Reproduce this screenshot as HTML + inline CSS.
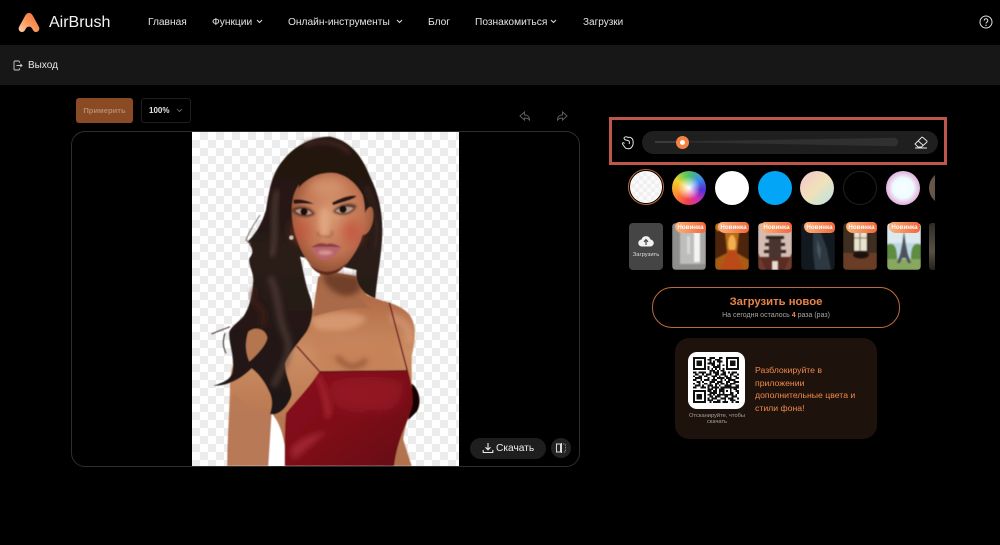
<!DOCTYPE html>
<html lang="ru">
<head>
<meta charset="utf-8">
<title>AirBrush</title>
<style>
html,body{margin:0;padding:0;background:#000}
body{width:1000px;height:545px;position:relative;overflow:hidden;font-family:"Liberation Sans",sans-serif;color:#fff}
.a{position:absolute;white-space:nowrap}
.nav{top:16px;font-size:10.2px;line-height:13px;color:#e4e4e4}
.c{position:absolute;top:171px;width:34px;height:34px;border-radius:50%}
.t{position:absolute;top:223px;width:34px;height:47px;border-radius:4px;overflow:hidden}
.t svg{position:absolute;left:0;top:0;width:34px;height:47px;filter:blur(.9px)}
.b{position:absolute;top:222px;height:11px;width:31px;border-radius:5px 5px 5px 8px;background:linear-gradient(90deg,#fbb27c,#f0683a);color:#fff;font-size:6.2px;font-weight:bold;line-height:11px;text-align:center}
</style>
</head>
<body>
<!-- top bar -->
<svg class="a" style="left:18px;top:12px" width="22" height="21" viewBox="0 0 22 21">
<defs><linearGradient id="lg" x1="0" y1="1" x2="1" y2="0"><stop offset="0" stop-color="#ffd2ae"/><stop offset=".5" stop-color="#fb9458"/><stop offset="1" stop-color="#f26a36"/></linearGradient></defs>
<path d="M11 1C9 1 8 2.200 7 4L1 15C0 17 1.200 20 4 20C6 20 6.800 18.600 7.600 17C8.400 15.400 9.500 14.600 11 14.600C12.500 14.600 13.600 15.400 14.400 17C15.200 18.600 16 20 18 20C20.800 20 22 17 21 15L15 4C14 2.200 13 1 11 1Z" fill="url(#lg)"/>
</svg>
<div class="a" style="left:49px;top:13px;font-size:16px;line-height:19px;letter-spacing:0;color:#f2f2f2">AirBrush</div>
<div class="a nav" style="left:148px">Главная</div>
<div class="a nav" style="left:212px">Функции</div>
<svg class="a" style="left:256px;top:19px" width="7" height="5" viewBox="0 0 7 5"><path d="M1 1l2.500 2.500L6 1" fill="none" stroke="#ddd" stroke-width="1"/></svg>
<div class="a nav" style="left:288px">Онлайн-инструменты</div>
<svg class="a" style="left:396px;top:19px" width="7" height="5" viewBox="0 0 7 5"><path d="M1 1l2.500 2.500L6 1" fill="none" stroke="#ddd" stroke-width="1"/></svg>
<div class="a nav" style="left:428px">Блог</div>
<div class="a nav" style="left:475px">Познакомиться</div>
<svg class="a" style="left:550px;top:19px" width="7" height="5" viewBox="0 0 7 5"><path d="M1 1l2.500 2.500L6 1" fill="none" stroke="#ddd" stroke-width="1"/></svg>
<div class="a nav" style="left:583px;font-size:10px">Загрузки</div>
<svg class="a" style="left:979px;top:15px" width="14" height="14" viewBox="0 0 14 14"><circle cx="7" cy="7" r="6" fill="none" stroke="#ddd" stroke-width="1"/><path d="M5.200 5.600a1.800 1.800 0 1 1 2.700 1.500c-.6.400-.9.700-.9 1.400" fill="none" stroke="#ddd" stroke-width="1"/><circle cx="7" cy="10.300" r=".7" fill="#ddd"/></svg>

<!-- sub bar -->
<div class="a" style="left:0;top:45px;width:1000px;height:40px;background:#171717"></div>
<svg class="a" style="left:13px;top:60px" width="10" height="11" viewBox="0 0 10 11"><path d="M6.500 2.800V2a1 1 0 0 0-1-1H2a1 1 0 0 0-1 1v7a1 1 0 0 0 1 1h3.500a1 1 0 0 0 1-1v-.8M3.500 5.500h5.500M7.400 3.900 9 5.500 7.400 7.100" fill="none" stroke="#ccc" stroke-width=".9"/></svg>
<div class="a" style="left:28px;top:59px;font-size:10px;line-height:13px;color:#e6e6e6">Выход</div>

<!-- toolbar -->
<div class="a" style="left:76px;top:98px;width:57px;height:25px;border-radius:3px;background:#8a4a24;color:#b48a70;font-size:7.600px;font-weight:bold;line-height:25px;text-align:center">Примерить</div>
<div class="a" style="left:141px;top:98px;width:48px;height:23px;border:1px solid #1e1e1e;border-radius:3px"></div>
<div class="a" style="left:149px;top:105px;font-size:8px;font-weight:bold;line-height:11px;color:#e6e6e6">100%</div>
<svg class="a" style="left:176px;top:108px" width="7" height="5" viewBox="0 0 7 5"><path d="M1 1l2.500 2.500L6 1" fill="none" stroke="#777" stroke-width=".8"/></svg>
<svg class="a" style="left:519px;top:111px" width="12" height="11" viewBox="0 0 12 11"><path d="M5.500 1 1 5l4.500 4V7c2 0 3.600.4 5 2 0-3-1.800-5-5-5Z" fill="none" stroke="#5e5e5e" stroke-width="1"/></svg>
<svg class="a" style="left:556px;top:111px" width="12" height="11" viewBox="0 0 12 11"><path d="M6.500 1 11 5 6.500 9V7c-2 0-3.600.4-5 2 0-3 1.800-5 5-5Z" fill="none" stroke="#5e5e5e" stroke-width="1"/></svg>

<!-- canvas -->
<div class="a" style="left:71px;top:131px;width:507px;height:334px;border:1px solid #2e2e2e;border-radius:14px;background:#000"></div>
<div class="a" style="left:192px;top:132px;width:267px;height:334px;background:conic-gradient(#ececec 25%,#fff 0 50%,#ececec 0 75%,#fff 0) 0 0/16px 16px"></div>

<svg class="a" style="left:190px;top:130px" width="270" height="336" viewBox="0 0 810 1008">
<defs>
<filter id="bl0" x="-5%" y="-5%" width="110%" height="110%"><feGaussianBlur stdDeviation="1.700"/></filter>
<filter id="bl2" x="-40%" y="-40%" width="180%" height="180%"><feGaussianBlur stdDeviation="8"/></filter>
<filter id="bl3" x="-60%" y="-60%" width="220%" height="220%"><feGaussianBlur stdDeviation="16"/></filter>
<filter id="bl4" x="-40%" y="-40%" width="180%" height="180%"><feGaussianBlur stdDeviation="3.500"/></filter>
<radialGradient id="fg" cx=".5" cy=".42" r=".62"><stop offset="0" stop-color="#d89a72"/><stop offset=".6" stop-color="#c07452"/><stop offset="1" stop-color="#84462c"/></radialGradient>
<linearGradient id="sk" x1="0" y1="0" x2="0" y2="1"><stop offset="0" stop-color="#a0603f"/><stop offset=".12" stop-color="#b26c48"/><stop offset=".4" stop-color="#cc8e64"/><stop offset=".7" stop-color="#bc7a52"/><stop offset="1" stop-color="#b0714e"/></linearGradient>
<linearGradient id="dr" x1="0" y1="0" x2="1" y2="1"><stop offset="0" stop-color="#8a0f1c"/><stop offset=".5" stop-color="#7e0d19"/><stop offset="1" stop-color="#640914"/></linearGradient>
<linearGradient id="hr" x1="0" y1="0" x2="0" y2="1"><stop offset="0" stop-color="#22120e"/><stop offset=".45" stop-color="#2a1c19"/><stop offset="1" stop-color="#1e1513"/></linearGradient>
</defs>
<g filter="url(#bl0)">
<!-- black shadow right -->
<path d="M665 760 C690 780 695 820 680 845 L655 870Z" fill="#120404"/>
<!-- body -->
<path d="M112 1008 C112 930 118 850 120 780 C118 720 140 650 170 600 C220 570 300 560 370 535 L385 440 L510 450 L530 495 C570 515 620 515 655 550 C680 580 678 620 665 680 L665 800 C660 860 640 900 640 930 L665 1008Z" fill="url(#sk)"/>
<path d="M360 565 C420 540 490 540 530 565 C510 600 430 610 375 595Z" fill="#dfa47c" opacity=".7" filter="url(#bl2)"/>
<path d="M370 620 C430 650 560 640 620 620 C630 660 640 700 640 720 L400 720 C380 690 365 650 370 620Z" fill="#c47c52" opacity=".6" filter="url(#bl3)"/>
<path d="M440 680 C470 715 495 720 530 690" fill="none" stroke="#804226" stroke-width="14" opacity=".7" filter="url(#bl2)"/>
<path d="M600 560 C640 570 660 590 660 640" fill="none" stroke="#dca27e" stroke-width="26" opacity=".5" filter="url(#bl2)"/>
<path d="M370 540 C390 500 390 460 390 420 L510 440 C500 480 510 510 540 535 C470 530 420 545 370 560Z" fill="#a96a48"/>
<path d="M400 450 C430 500 480 510 510 480 L510 440 L400 425Z" fill="#643420" opacity=".8" filter="url(#bl2)"/>
<path d="M130 790 C180 830 220 860 245 850 L250 1008 L115 1008 C115 930 120 860 130 790Z" fill="#b87a58" opacity=".9"/>
<path d="M245 850 C260 870 285 900 290 1008 L235 1008Z" fill="#fff"/>
<path d="M262 860 C275 870 285 890 290 940 L285 860Z" fill="#b47450"/>
<!-- straps -->
<path d="M598 518 L652 722" stroke="#6b0d1a" stroke-width="4" fill="none"/>
<path d="M320 648 L388 724" stroke="#6b0d1a" stroke-width="4" fill="none"/>
<!-- dress -->
<path d="M284 1008 C284 950 284 890 288 850 C320 810 360 770 388 725 L654 722 C662 750 670 790 668 820 C660 870 625 910 612 1008Z" fill="url(#dr)"/>
<path d="M390 730 C405 780 420 810 425 850 L410 870 C400 820 395 780 380 745Z" fill="#b93240" opacity=".65" filter="url(#bl2)"/>
<path d="M420 760 C490 740 570 740 640 760 C640 800 630 830 600 840 C530 850 460 840 430 820Z" fill="#a3202e" opacity=".55" filter="url(#bl3)"/>
<path d="M300 960 C320 930 360 910 410 905 C370 940 340 970 310 990Z" fill="#b13140" opacity=".6" filter="url(#bl2)"/>
<path d="M388 725 L654 722" stroke="#4a0710" stroke-width="3"/>
<!-- hair -->
<path d="M420 20 C370 20 315 45 280 90 C245 130 238 180 228 240 C215 285 190 320 172 335 C185 350 195 365 178 385 C175 405 190 425 190 450 C188 490 180 530 160 560 C140 580 125 590 118 605 C115 640 135 680 128 720 C125 745 110 755 70 767 C110 768 150 750 185 715 C205 730 225 755 240 790 C250 815 245 835 240 852 C265 860 295 830 305 795 C305 765 285 735 285 700 C300 665 325 640 350 605 C370 570 372 530 360 500 C345 460 340 420 330 380 L500 420 C495 450 510 490 556 505 C560 450 572 390 576 330 C580 260 570 200 540 140 C520 90 490 35 420 20Z" fill="url(#hr)"/>
<path d="M175 605 C200 585 230 600 232 625 C225 650 200 675 178 695 C165 665 165 635 175 605Z" fill="#b4764f"/>
<path d="M120 590 C100 598 80 605 65 612" fill="none" stroke="#3a2a26" stroke-width="3"/>
<path d="M105 610 C98 630 98 650 108 670" fill="none" stroke="#3a2a26" stroke-width="3"/>
<path d="M240 440 C270 500 260 560 290 620 C310 680 270 720 250 770" fill="none" stroke="#5e4a42" stroke-width="20" opacity=".55" filter="url(#bl2)"/>
<path d="M262 180 C245 250 262 310 245 380" fill="none" stroke="#6e5a50" stroke-width="14" opacity=".55" filter="url(#bl2)"/>
<path d="M195 470 C165 540 240 510 215 590" fill="none" stroke="#4a1f16" stroke-width="14" opacity=".7" filter="url(#bl2)"/>
<path d="M210 255 C190 285 175 310 168 330 L182 342" fill="none" stroke="#6b5a52" stroke-width="2.500"/>
<path d="M530 170 C560 240 565 300 555 360" fill="none" stroke="#3f2c26" stroke-width="14" opacity=".6" filter="url(#bl2)"/>
<path d="M340 45 C400 25 450 35 480 70" fill="none" stroke="#50302a" stroke-width="14" opacity=".7" filter="url(#bl2)"/>
<!-- face -->
<path d="M330 160 C370 125 430 120 480 135 C515 160 525 210 525 250 C530 235 548 215 550 250 C552 285 535 315 518 315 C508 350 485 390 450 422 C425 442 395 436 372 415 C340 385 318 335 308 280 C302 230 305 190 330 160Z" fill="url(#fg)"/>
<ellipse cx="485" cy="305" rx="30" ry="38" fill="#c4503a" opacity=".7" filter="url(#bl3)"/>
<ellipse cx="335" cy="305" rx="24" ry="34" fill="#c4503a" opacity=".65" filter="url(#bl3)"/>
<ellipse cx="403" cy="280" rx="16" ry="48" fill="#e6ae88" opacity=".75" filter="url(#bl2)"/>
<ellipse cx="410" cy="170" rx="55" ry="25" fill="#d89c76" opacity=".7" filter="url(#bl3)"/>
<path d="M340 115 C390 100 430 105 470 120 C500 135 520 180 530 220 C510 170 480 140 440 130 C400 125 360 135 325 175Z" fill="#221210"/>
<!-- brows -->
<path d="M310 210 C325 205 350 210 372 222 C345 220 325 220 312 222Z" fill="#2a1814"/>
<path d="M426 218 C450 205 480 193 500 198 C490 210 455 216 430 226Z" fill="#2a1814"/>
<!-- eyes -->
<path d="M304 240 C325 222 360 226 376 252 C350 268 322 262 304 240Z" fill="#4a2a20" opacity=".8" filter="url(#bl4)"/>
<path d="M428 244 C450 218 485 215 500 228 C488 256 450 262 428 244Z" fill="#4a2a20" opacity=".8" filter="url(#bl4)"/>
<path d="M316 242 C330 233 352 235 366 250 C348 258 328 255 316 242Z" fill="#b89a8c"/>
<path d="M436 243 C452 230 475 228 490 234 C480 250 452 254 436 243Z" fill="#b89a8c"/>
<circle cx="342" cy="245" r="11" fill="#1e0e0a"/><circle cx="459" cy="238" r="11" fill="#1e0e0a"/>
<path d="M385 305 C378 318 395 322 405 320 C420 322 432 316 424 302" fill="none" stroke="#8e4e34" stroke-width="4" opacity=".75" filter="url(#bl4)"/>
<!-- lips -->
<path d="M364 352 C385 335 405 342 412 342 C425 338 440 340 454 352 C440 378 420 390 400 390 C385 390 372 372 364 352Z" fill="#b8666a"/>
<path d="M364 352 C390 350 430 350 454 352 C437 344 420 336 410 343 C395 336 380 340 364 352Z" fill="#8e4044"/>
<ellipse cx="406" cy="368" rx="21" ry="7" fill="#dc9a98" opacity=".9" filter="url(#bl4)"/>
<path d="M355 398 C380 430 430 438 470 398 C450 432 420 438 400 434 C380 430 365 415 355 398Z" fill="#5e2c1a"/>
<!-- earring -->
<circle cx="304" cy="323" r="6" fill="#cfc4b6"/>
</g>
</svg>

<!-- download -->
<div class="a" style="left:470px;top:438px;width:76px;height:21px;border-radius:11px;background:#1e1e1e"></div>
<svg class="a" style="left:482px;top:442px" width="12" height="12" viewBox="0 0 12 12"><path d="M6 1v6.500M3.500 5.200 6 7.800l2.500-2.600M1.200 8v2.500h9.600V8" fill="none" stroke="#eee" stroke-width="1.100"/></svg>
<div class="a" style="left:496px;top:442px;font-size:10.200px;line-height:13px;color:#eee">Скачать</div>
<div class="a" style="left:551px;top:438px;width:20px;height:20px;border-radius:50%;background:#222"></div>
<svg class="a" style="left:555px;top:442px" width="12" height="12" viewBox="0 0 12 12"><path d="M5.500 2H1.500v8h4z" fill="none" stroke="#ddd" stroke-width="1"/><path d="M6.500 1v10" stroke="#ddd" stroke-width="1"/><path d="M8 2h2.500v8H8" fill="none" stroke="#888" stroke-width="1" stroke-dasharray="1.500 1.200"/></svg>

<!-- red highlight box -->
<div class="a" style="left:609px;top:117px;width:332px;height:42px;border:3px solid #bf564b"></div>
<svg class="a" style="left:621px;top:135px" width="14" height="15" viewBox="0 0 14 15"><path d="M3 3C3.500 1.500 6 1.500 7 2.500C9 1.800 11.500 3 12 5.500C12.500 8 12 11 10 13C8 14 5 14 4 12.500L1.500 9C1 8 2.500 7 3.500 8.500" fill="none" stroke="#e4e4e4" stroke-width="1"/><path d="M3 3C3 5 5 5 7 5.500C8.500 6 9 7.500 8 9" fill="none" stroke="#e4e4e4" stroke-width="1"/></svg>
<div class="a" style="left:642px;top:131px;width:296px;height:23px;border-radius:12px;background:#1f1f1f"></div>
<svg class="a" style="left:654px;top:137px" width="246" height="10" viewBox="0 0 246 10"><path d="M1 4.700L240 .8a4.200 4.200 0 0 1 0 8.400Z" fill="#303030"/><path d="M1 4.500h27v1H1z" fill="#5a5a5a"/></svg>
<div class="a" style="left:676px;top:136px;width:13px;height:13px;border-radius:50%;background:#f58144"></div>
<div class="a" style="left:680px;top:140px;width:5px;height:5px;border-radius:50%;background:#fff"></div>
<svg class="a" style="left:914px;top:136px" width="14" height="13" viewBox="0 0 14 13"><path d="M1 8 7.500 1.500a1 1 0 0 1 1.400 0l3.800 3.300a1 1 0 0 1 0 1.500L7.500 11H4ZM4 4.800l5 4.300M1 12h12" fill="none" stroke="#e4e4e4" stroke-width="1"/></svg>

<!-- colour circles -->
<div class="c" style="left:628px;top:169px;width:36px;height:36px;border:1px solid #c06a3c;box-sizing:border-box"></div>
<div class="c" style="left:630px;top:171px;width:32px;height:32px;border:1px solid #fff;box-sizing:border-box;background:conic-gradient(#f0f0f0 25%,#fafafa 0 50%,#f0f0f0 0 75%,#fafafa 0) 0 0/8px 8px"></div>
<div class="c" style="left:672px;background:radial-gradient(circle at 50% 50%,#fff 0,rgba(255,255,255,.75) 12%,rgba(255,255,255,0) 48%),conic-gradient(#4fc06a,#3b8fe8 14%,#5030d8 27%,#d030b0 40%,#f04050 52%,#ff8c30 68%,#f0d030 84%,#70cc50 94%,#4fc06a)"></div>
<div class="c" style="left:715px;background:#fff"></div>
<div class="c" style="left:758px;background:#03a6f6"></div>
<div class="c" style="left:800px;background:linear-gradient(135deg,#f6c4d0,#f0e2b8 50%,#b8e2e8)"></div>
<div class="c" style="left:843px;background:#000;border:1px solid #222;box-sizing:border-box"></div>
<div class="c" style="left:886px;background:radial-gradient(circle,#f6feff 0,#eefcff 42%,#e6b8e0 66%,#d8bce6 76%,#a0c0e4 92%,#a8c4e0 100%)"></div>
<div class="a" style="left:929px;top:171px;width:6px;height:34px;overflow:hidden"><div style="width:34px;height:34px;border-radius:50%;background:linear-gradient(90deg,#6b5a4e,#3a2e28)"></div></div>

<!-- upload tile -->
<div class="a" style="left:629px;top:223px;width:34px;height:47px;border-radius:4px;background:#454545"></div>
<svg class="a" style="left:638px;top:234px" width="16" height="13" viewBox="0 0 16 13"><path d="M4 12.500a3.500 3.500 0 0 1-.5-7 4.700 4.700 0 0 1 9 0 3.500 3.500 0 0 1-.5 7Z" fill="#f0f0f0"/><path d="M8 11V6M6 7.800l2-2.200 2 2.200" fill="none" stroke="#454545" stroke-width="1.200"/></svg>
<div class="a" style="left:629px;top:251px;width:34px;text-align:center;font-size:5.800px;line-height:8px;color:#ddd">Загрузить</div>

<!-- thumbnails -->
<div class="t" style="left:672px"><svg viewBox="0 0 34 47"><rect width="34" height="47" fill="#bdbdbb"/><rect width="8" height="47" fill="#8f8f8d"/><rect x="28" width="6" height="47" fill="#a8a8a6"/><rect x="15" y="13" width="3" height="18" fill="#d8d8d8"/><rect x="22" y="9" width="6" height="30" fill="#f4f4f4"/><rect y="41" width="34" height="6" fill="#8e8e8c"/></svg></div>
<div class="t" style="left:715px"><svg viewBox="0 0 34 47"><rect width="34" height="47" fill="#a85c14"/><path d="M0 0h34v32L20 26h-6L0 34Z" fill="#b86a18"/><path d="M0 6l10 4 2 20-12 6zM34 5l-10 5-2 20 12 7z" fill="#4e240c"/><ellipse cx="17" cy="21" rx="4" ry="9" fill="#eeb050"/><path d="M14 27h6l9 20H5Z" fill="#bc4a18"/><rect x="2" y="3" width="6" height="5" fill="#d88a28"/><rect x="25" y="3" width="6" height="5" fill="#dc9030"/></svg></div>
<div class="t" style="left:758px"><svg viewBox="0 0 34 47"><rect width="34" height="47" fill="#d4bcb2"/><rect y="34" width="34" height="13" fill="#5a2c22"/><path d="M8 13h18v3H8zM7 20h20v3H7zM6 27h22v3H6z" fill="#2e2220"/><rect x="11" y="16" width="12" height="20" fill="#4a3430"/><path d="M0 30l8 17H0zM34 30l-8 17h8z" fill="#6e3a2c"/><rect x="14" y="38" width="6" height="9" fill="#e8dcd4"/></svg></div>
<div class="t" style="left:801px"><svg viewBox="0 0 34 47"><rect width="34" height="47" fill="#121a20"/><path d="M12 8l8 2 6 16 4 21H14l-2-18Z" fill="#2c3842"/><path d="M16 16l4 10-1 12-3-10Z" fill="#48545e"/></svg></div>
<div class="t" style="left:843px"><svg viewBox="0 0 34 47"><rect width="34" height="47" fill="#33241a"/><rect x="11" y="6" width="13" height="22" fill="#e8e4d0"/><path d="M17 6v22M11 15h13" stroke="#6e5a44" stroke-width=".8"/><rect width="9" height="30" fill="#3e2e20"/><rect x="26" width="8" height="30" fill="#3e2e20"/><rect y="30" width="34" height="17" fill="#6a3e26"/><ellipse cx="18" cy="32" rx="8" ry="3.500" fill="#1c120c"/></svg></div>
<div class="t" style="left:887px"><svg viewBox="0 0 34 47"><rect width="34" height="47" fill="#bcd8e6"/><rect width="34" height="20" fill="#dceaf0"/><path d="M0 22c8-4 10 4 10 14H0zM34 22c-8-4-10 4-10 14h10z" fill="#5e8c40"/><rect y="36" width="34" height="11" fill="#88a860"/><path d="M17 8l1.500 12 2.200 11 3.300 9h-3l-2-5h-4l-2 5h-3l3.300-9 2.200-11Z" fill="#4e505c"/></svg></div>
<div class="a" style="left:929px;top:223px;width:6px;height:47px;background:linear-gradient(#2e2a26,#5a5044 60%,#24201c);border-radius:3px 0 0 3px"></div>
<div class="b" style="left:675px">Новинка</div>
<div class="b" style="left:718px">Новинка</div>
<div class="b" style="left:761px">Новинка</div>
<div class="b" style="left:804px">Новинка</div>
<div class="b" style="left:846px">Новинка</div>
<div class="b" style="left:889px">Новинка</div>

<!-- main button -->
<div class="a" style="left:652px;top:287px;width:246px;height:39px;border:1px solid #c06a3a;border-radius:20px"></div>
<div class="a" style="left:652px;top:295px;width:248px;text-align:center;font-size:11.300px;font-weight:bold;line-height:14px;color:#ea8448">Загрузить новое</div>
<div class="a" style="left:652px;top:311px;width:248px;text-align:center;font-size:7px;line-height:10px;color:#a8a8a8">На сегодня осталось <b style="color:#f28a4c">4</b> раза (раз)</div>

<!-- QR card -->
<div class="a" style="left:675px;top:338px;width:202px;height:101px;border-radius:14px;background:#1d120c"></div>
<div class="a" style="left:688px;top:352px;width:57px;height:57px;border-radius:9px;background:#fff"></div>
<svg class="a" style="left:693px;top:357px" width="46" height="46" viewBox="0 0 25 25" shape-rendering="crispEdges">
<path fill="none" stroke="#111" d="M0 .5h7M9 .5h3M14 .5h2M18 .5h7M0 1.500h1M6 1.500h1M8 1.500h2M12 1.500h3M18 1.500h1M24 1.500h1M0 2.500h1M2 2.500h3M6 2.500h1M9 2.500h1M11 2.500h1M13 2.500h3M18 2.500h1M20 2.500h3M24 2.500h1M0 3.500h1M2 3.500h3M6 3.500h1M8 3.500h4M14 3.500h1M18 3.500h1M20 3.500h3M24 3.500h1M0 4.500h1M2 4.500h3M6 4.500h1M10 4.500h2M13 4.500h2M16 4.500h1M18 4.500h1M20 4.500h3M24 4.500h1M0 5.500h1M6 5.500h1M8 5.500h1M11 5.500h4M18 5.500h1M24 5.500h1M0 6.500h7M8 6.500h1M10 6.500h1M12 6.500h1M14 6.500h1M16 6.500h1M18 6.500h7M9 7.500h3M13 7.500h1M15 7.500h2M0 8.500h2M3 8.500h4M9 8.500h1M11 8.500h3M16 8.500h2M19 8.500h1M21 8.500h3M1 9.500h2M5 9.500h1M7 9.500h3M12 9.500h2M15 9.500h3M20 9.500h2M24 9.500h1M0 10.500h1M3 10.500h2M6 10.500h2M10 10.500h3M14 10.500h1M17 10.500h2M20 10.500h1M22 10.500h2M1 11.500h4M8 11.500h1M11 11.500h1M13 11.500h4M18 11.500h3M23 11.500h2M0 12.500h2M4 12.500h1M6 12.500h3M10 12.500h3M15 12.500h1M17 12.500h1M19 12.500h4M2 13.500h2M5 13.500h1M9 13.500h3M13 13.500h3M18 13.500h2M22 13.500h3M0 14.500h1M3 14.500h1M6 14.500h2M9 14.500h1M12 14.500h2M15 14.500h2M18 14.500h1M20 14.500h3M1 15.500h3M5 15.500h1M8 15.500h3M12 15.500h1M14 15.500h1M17 15.500h4M23 15.500h2M0 16.500h2M4 16.500h3M8 16.500h1M10 16.500h4M15 16.500h10M8 17.500h3M12 17.500h1M14 17.500h2M16 17.500h1M20 17.500h1M22 17.500h2M0 18.500h7M8 18.500h2M11 18.500h2M14 18.500h3M18 18.500h1M20 18.500h1M23 18.500h2M0 19.500h1M6 19.500h1M9 19.500h4M14 19.500h1M16 19.500h1M20 19.500h2M24 19.500h1M0 20.500h1M2 20.500h3M6 20.500h1M8 20.500h2M11 20.500h1M13 20.500h4M17 20.500h5M23 20.500h1M0 21.500h1M2 21.500h3M6 21.500h1M9 21.500h2M12 21.500h3M17 21.500h2M21 21.500h3M0 22.500h1M2 22.500h3M6 22.500h1M8 22.500h1M10 22.500h3M15 22.500h3M19 22.500h3M24 22.500h1M0 23.500h1M6 23.500h1M8 23.500h3M13 23.500h2M17 23.500h1M20 23.500h3M0 24.500h7M9 24.500h1M11 24.500h4M16 24.500h3M21 24.500h1M23 24.500h2"/>
</svg>
<div class="a" style="left:678px;top:413px;width:78px;text-align:center;font-size:5.700px;line-height:6px;color:#a8a29e">Отсканируйте, чтобы<br>скачать</div>
<div class="a" style="left:755px;top:364px;font-size:8.700px;line-height:12.600px;color:#f08a4c">Разблокируйте в<br>приложении<br>дополнительные цвета и<br>стили фона!</div>
</body>
</html>
